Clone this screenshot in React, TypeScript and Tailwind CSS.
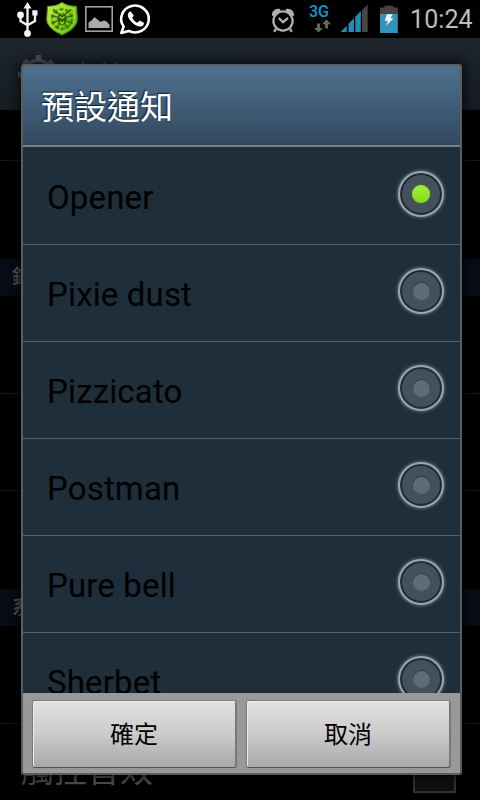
import type { ReactNode } from "react";

const sounds = ["Opener", "Pixie dust", "Pizzicato", "Postman", "Pure bell", "Sherbet"];

function StatusBar() {
  return (
    <header className="flex h-[38px] shrink-0 items-center justify-between bg-black pr-[7px] pl-[16px]">
      <svg width="138" height="38" viewBox="16 0 138 38" aria-label="Notifications">
        <defs>
          <linearGradient id="shield" x1="0" y1="0" x2="1" y2="1">
            <stop offset="0" stopColor="#cdf14a" />
            <stop offset=".45" stopColor="#8fd81c" />
            <stop offset="1" stopColor="#2fae00" />
          </linearGradient>
        </defs>
        <g fill="none" stroke="#f4f4f4" strokeWidth="2.300">
          <path d="M27.500 33V6M20.500 15v6l7 4.200M35 14v7l-7.500 4.200" />
          <path d="M27.500 2l-4 6.500h8zM32.300 10.300h5.200v5.200h-5.200z" fill="#f4f4f4" stroke="none" />
          <circle cx="20.500" cy="15" r="3.400" fill="#f4f4f4" stroke="none" />
          <circle cx="27.500" cy="33.500" r="3.400" fill="#f4f4f4" stroke="none" />
        </g>
        <path d="M62 2.300c4 3 9 4 14.500 4l.8 13c0 7-7.300 12-15.300 15.700-8-3.700-15.300-8.700-15.300-15.700l.8-13c5.500 0 10.500-1 14.500-4z" fill="url(#shield)" stroke="#4d8d18" strokeWidth="1" />
        <path d="M62 5c3 2.200 7 3.400 12 3.500l.5 11C74.500 25 69 29.500 62 32.500 55 29.500 49.500 25 49.500 19.500l.5-11C55 8.400 59 7.200 62 5z" fill="none" stroke="#b0e43c" strokeWidth=".9" />
        <circle cx="62" cy="19" r="9.800" fill="none" stroke="#4a7a08" strokeWidth="2" strokeDasharray="4.200 1.957" />
        <g stroke="#3f6a06" strokeWidth="1.700">
          <path d="M58.500 14L53 9.500M65.500 14L71 9.500M57 17l-6-1.500M67 17l6-1.500M57 21l-5.500 2.500M67 21l5.500 2.500M59 24.500l-3 4M65 24.500l3 4" />
        </g>
        <ellipse cx="62" cy="19" rx="4.800" ry="6.300" fill="#345a04" />
        <path d="M62 12v3M59.500 16.500l2.500 2 2.500-2M60 21.500l2 2.500 2-2.500" fill="none" stroke="#a4dc25" strokeWidth="1.300" />
        <rect x="85.800" y="6.800" width="26.400" height="24.400" fill="none" stroke="#a1a1a1" strokeWidth="1.600" />
        <path d="M88.500 28v-5.500l3-2 3-3.500 3.500 3 2.500 2 3.500-1.500 2.500 1 3 3V28z" fill="#aaa" />
        <path d="M123.600 26.600a13.800 13.400 0 1 1 5 4.300L121.300 33z" fill="none" stroke="#fff" strokeWidth="2.600" strokeLinejoin="round" />
        <path d="M130.800 11.500c-1.500-.4-3 1.800-3 3.500 0 4.800 7.700 11.600 12.400 11.600 2.400 0 4.200-2 3.600-3.900l-4.100-2.300-2.400 2.400c-2.200-.8-4.200-3-5.100-5l1.600-2.200z" fill="#fff" />
      </svg>
      <div className="flex items-center">
        <svg width="136" height="38" viewBox="266 0 136 38" aria-label="Device status">
          <g fill="none" stroke="#b0b0b0" strokeWidth="2.300">
            <circle cx="283" cy="21" r="9.600" />
            <path d="M278.800 18l4.200 4.200 5-4.200M276 28.800l-1.800 3M290 28.800l1.800 3" />
          </g>
          <path d="M272 15.500c-.6-4 3.800-7.800 8-6.400l.5 1.100-7.300 6zM294 15.500c.6-4-3.800-7.800-8-6.400l-.5 1.100 7.300 6z" fill="#b0b0b0" />
          <text x="309" y="17" fill="#009ed1" className="font-['Roboto'] text-[16.500px] font-medium" textLength="20" lengthAdjust="spacingAndGlyphs">3G</text>
          <path d="M317 23.500h3V28h3l-4.500 4.500L314 28h3zM325 28.500v-4.300h-3l4.500-5 4.500 5h-3v4.300z" fill="#656565" />
          <path d="M340.500 32l6.200-6.300V32zM348.500 32v-8.200l5.500-5.600V32zM355.300 32V16.700l5.500-5.700V32z" fill="#258bb3" />
          <path d="M362 32V10l5.700-5.500V32z" fill="#454545" />
          <path d="M380 14V7.500h4.500V5.700h9v1.800h4.300V14z" fill="#434343" />
          <path d="M380 14h17.800v19H380z" fill="#3294bc" />
          <path d="M386.800 14.200h6l-2.500 4h3.200l-7.300 7.600 1.800-5-3.200.2z" fill="#f2f8fa" />
        </svg>
        <time className="ml-[8px] w-[63px] pt-[2px] text-[25px] leading-[38px] tracking-[0.1px] whitespace-nowrap text-[#bdbdbd]">10:24</time>
      </div>
    </header>
  );
}

function SectionTitle({ children }: { children: ReactNode }) {
  return (
    <div className="h-[37px] bg-[#070d16] pl-[12px] text-[20px] leading-[37px] font-medium text-[#555b60]">{children}</div>
  );
}

function Gear() {
  return (
    <svg width="44" height="44" viewBox="0 0 44 44">
      <circle cx="22" cy="22" r="14.500" fill="#1a2250" stroke="#505357" strokeWidth="3.500" />
      <circle cx="22" cy="22" r="17.500" fill="none" stroke="#505357" strokeWidth="5" strokeDasharray="5.500 8.244" strokeDashoffset="2.750" />
    </svg>
  );
}

function SettingsPage() {
  return (
    <main className="flex flex-col text-[33px] text-[#505254]">
      <div className="flex h-[72px] items-start bg-linear-to-b from-[#1e272e] to-[#151c23] pt-[15px] pl-[16px] text-[28px] text-[#3e464c]">
        <Gear />
        <span className="ml-[9px] pt-[3px] leading-[42px]">音效</span>
      </div>
      <div className="h-[51px] border-b border-[#171717]" />
      <div className="h-[98px]" />
      <SectionTitle>鈴聲和通知</SectionTitle>
      <div className="h-[98px] border-b border-[#171717]" />
      <div className="h-[97px] border-b border-[#171717]" />
      <div className="h-[98px]" />
      <SectionTitle>系統</SectionTitle>
      <div className="h-[98px] border-b border-[#171717]" />
      <div className="flex h-[96px] items-start justify-between pt-[28px] pr-[24px] pl-[21px]">
        <span className="leading-[38px]">觸控音效</span>
        <span className="mt-[-1px] h-[42px] w-[43px] border-2 border-[#303238] bg-[#0e1114]" />
      </div>
    </main>
  );
}

function Radio({ checked }: { checked: boolean }) {
  return (
    <span className="flex size-[46px] shrink-0 items-center justify-center rounded-full border-2 border-[#9ca4aa] bg-[#43515c] shadow-[0_0_3px_1px_#5d6973,inset_0_0_0_2px_#202a32]">
      {checked ? (
        <span className="size-[18px] rounded-full bg-linear-to-b from-[#a2ef35] to-[#87d91c] shadow-[0_0_1px_#84d51c]" />
      ) : (
        <span className="mt-px size-[17px] rounded-full bg-[#5f6c75] shadow-[0_-1px_0_#2d3842]" />
      )}
    </span>
  );
}

function ActionButton({ children }: { children: ReactNode }) {
  return (
    <button className="h-[66px] flex-1 rounded-[2px] border-x border-t border-[#ededed] border-r-[#777] bg-linear-to-b from-[#e0e0e0] via-[#cbcbcb] to-[#a8a8a8] pt-px pr-px text-[24px] font-normal text-black shadow-[0_1px_0_#505050,0_0_1px_1px_#777]">
      {children}
    </button>
  );
}

function SoundDialog() {
  return (
    <section
      role="dialog"
      className="absolute top-[64px] left-[21px] flex h-[711px] w-[441px] flex-col overflow-hidden rounded-[3px] border-2 border-[#5b5c5d] bg-[#1e2e3b] shadow-[0_0_12px_3px_rgba(0,0,0,0.65)]"
    >
      <h1 className="h-[81px] shrink-0 border-b-2 border-[#75818b] bg-linear-to-b from-[#4d718f] to-[#33495f] pl-[18px] text-[33px] leading-[83px] font-normal text-white shadow-[inset_0_-2px_0_#2f455a] [text-shadow:-1px_-1px_1px_#10202c]">
        預設通知
      </h1>
      <ul className="flex h-[546px] shrink-0 flex-col overflow-hidden">
        {sounds.map((name, index) => (
          <li key={name} className="flex h-[97px] shrink-0 items-center justify-between border-b border-[#53616a] pr-[16px] pl-[24px] text-[33px] text-black first:h-[98px]">
            <span className="pt-[4px] tracking-[0.15px]">{name}</span>
            <span className="mb-[4px]"><Radio checked={index === 0} /></span>
          </li>
        ))}
      </ul>
      <div className="flex h-[80px] shrink-0 gap-[11px] bg-[#999] px-[10px] pt-[8px]">
        <ActionButton>確定</ActionButton>
        <ActionButton>取消</ActionButton>
      </div>
    </section>
  );
}

export default function App() {
  return (
    <div className="relative flex h-[800px] w-[480px] flex-col overflow-hidden bg-black font-['Roboto','Noto_Sans_CJK_TC',sans-serif]">
      <StatusBar />
      <SettingsPage />
      <SoundDialog />
    </div>
  );
}
